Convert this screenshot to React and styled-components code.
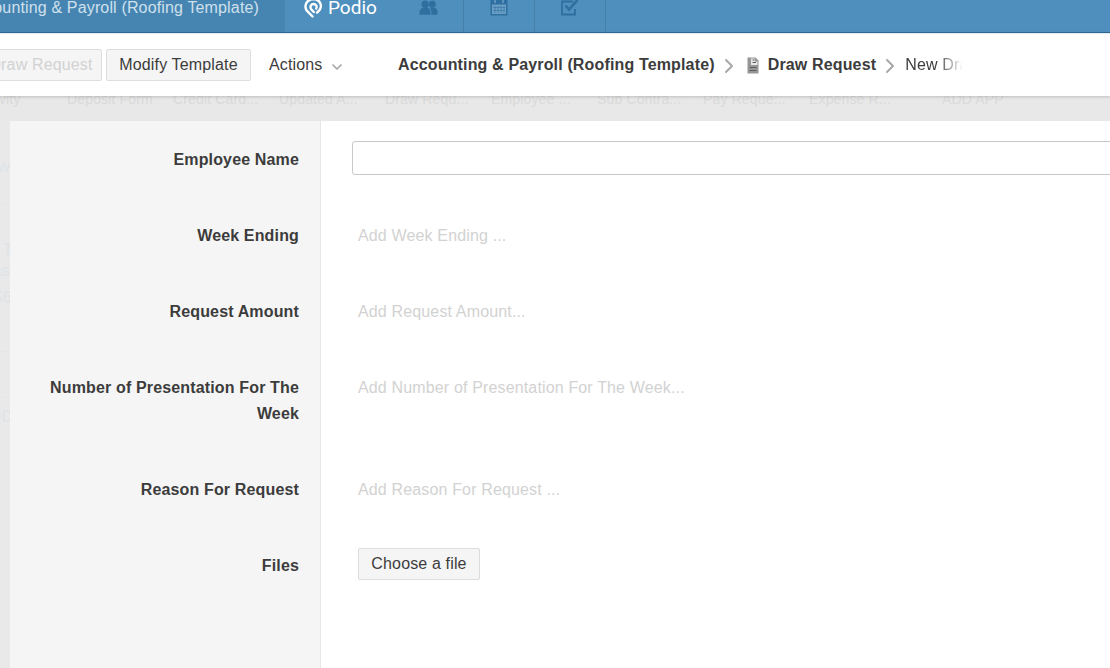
import styled, { createGlobalStyle } from "styled-components";
import { ChevronDown, ChevronRight } from "lucide-react";

const GlobalStyle = createGlobalStyle`
  html, body {
    margin: 0;
    padding: 0;
    height: 100%;
    overflow: hidden;
    background: #fff;
    font-family: "Liberation Sans", Arial, sans-serif;
    letter-spacing: 0.15px;
  }
`;

let Page = styled.div`
  width: 1110px;
  height: 668px;
  overflow: hidden;
  display: flex;
  flex-direction: column;
`;

let TopBar = styled.div`
  height: 32px;
  flex: none;
  display: flex;
  background: #4f8fbd;
  border-bottom: 1px solid #2f6a92;
  color: #fff;
`;

let WorkspaceCell = styled.div`
  width: 285px;
  flex: none;
  display: flex;
  justify-content: flex-end;
  overflow: hidden;
  white-space: nowrap;
  background: #4685b2;
  padding-right: 26px;
  box-sizing: border-box;
  font-size: 16px;
  line-height: 15px;
  color: #cfe0ec;
`;

let LogoCell = styled.div`
  width: 108px;
  flex: none;
  display: flex;
  align-items: flex-start;
  padding-left: 19px;
  box-sizing: border-box;
  gap: 5px;
  font-family: Roboto, "Liberation Sans", sans-serif;
  font-weight: 400;
  font-size: 19px;
  line-height: 15px;
  letter-spacing: 0;
`;

let NavCell = styled.div`
  width: 71px;
  flex: none;
  display: flex;
  justify-content: center;
  box-sizing: border-box;
  border-right: 1px solid #4680a9;
`;

let Toolbar = styled.div`
  height: 63px;
  flex: none;
  display: flex;
  align-items: center;
  background: #fff;
  position: relative;
  z-index: 2;
  box-shadow: 0 1px 3px rgba(0, 0, 0, 0.18);
  overflow: hidden;
  border-top: 1px solid #e4eef5;
  box-sizing: border-box;
`;

let ToolButton = styled.button`
  height: 32px;
  padding: 0;
  box-sizing: border-box;
  width: ${({ $width }) => $width}px;
  flex: none;
  border: 1px solid #dedede;
  border-radius: 2px;
  background: #f5f5f5;
  font: 16px "Liberation Sans", Arial, sans-serif;
  letter-spacing: 0.15px;
  color: ${({ $muted }) => ($muted ? "#d2d2d2" : "#3c3c3c")};
  margin: ${({ $margin }) => $margin || 0};
  white-space: nowrap;
`;

let Actions = styled.div`
  display: flex;
  align-items: center;
  gap: 6px;
  margin-left: 18px;
  width: 129px;
  flex: none;
  font-size: 16px;
  color: #3c3c3c;
  svg {
    color: #a5a5a5;
    margin-top: 3px;
  }
`;

let Breadcrumb = styled.div`
  display: flex;
  align-items: center;
  font-size: 16px;
  color: #3c3c3c;
  white-space: nowrap;
  svg.sep {
    color: #a8a8a8;
    margin: 2px 2px 0;
  }
  svg.sep:last-of-type {
    margin-right: 3px;
  }
`;

let Crumb = styled.span`
  font-weight: 700;
`;

let FadedCrumb = styled.span`
  width: 58px;
  overflow: hidden;
  -webkit-mask-image: linear-gradient(to right, #000 55%, transparent 100%);
  mask-image: linear-gradient(to right, #000 55%, transparent 100%);
`;

let AppTabs = styled.div`
  height: 25px;
  flex: none;
  display: flex;
  overflow: hidden;
  margin-left: -39px;
  background: #e8e8e8;
  width: 1149px;
`;

let AppTab = styled.div`
  width: ${({ $width }) => $width || 106}px;
  flex: none;
  font-size: 14px;
  line-height: 14px;
  margin-top: -4px;
  padding-left: ${({ $pad }) => $pad || 0}px;
  box-sizing: border-box;
  color: #dadada;
  white-space: nowrap;
`;

let Body = styled.div`
  flex: 1;
  display: flex;
  min-height: 0;
`;

let BackStrip = styled.div`
  width: 10px;
  flex: none;
  overflow: hidden;
  background: #e9e9e9;
  color: #dfe3e8;
  font-size: 16px;
  white-space: nowrap;
  position: relative;
`;

let BackText = styled.div`
  position: absolute;
  top: ${({ $top }) => $top}px;
  right: ${({ $right }) => $right || 0}px;
  line-height: 18px;
`;

let BackRule = styled.div`
  position: absolute;
  top: ${({ $top }) => $top}px;
  left: 0;
  right: 0;
  height: 1px;
  background: #e6e6e6;
`;

let FormGrid = styled.div`
  flex: 1;
  display: grid;
  grid-template-columns: 311px 1fr;
  grid-auto-rows: min-content;
  min-width: 0;
  background: linear-gradient(to right, #f5f5f5 310px, #e6e6e6 310px, #e6e6e6 311px, #fff 311px);
  overflow: hidden;
`;

let Label = styled.div`
  padding: 26px 22px 24px 30px;
  font-size: 16px;
  line-height: 26px;
  font-weight: 700;
  color: #3c3c3c;
  text-align: right;
`;

let Field = styled.div`
  padding: 26px 0 24px 37px;
  font-size: 16px;
  line-height: 26px;
  color: #d2d2d2;
  min-width: 0;
`;

let TextInput = styled.input`
  display: block;
  box-sizing: border-box;
  width: 900px;
  height: 34px;
  margin: -6px 0 -2px -6px;
  border: 1px solid #c8c8c8;
  border-radius: 3px;
  background: #fff;
  outline: none;
`;

let FileButton = styled.button`
  display: block;
  width: 122px;
  height: 32px;
  margin: -5px 0 -1px;
  padding: 0;
  border: 1px solid #dcdcdc;
  border-radius: 2px;
  background: #f5f5f5;
  font: 16px "Liberation Sans", Arial, sans-serif;
  letter-spacing: 0.15px;
  color: #3c3c3c;
`;

function PodioLogo() {
  return (
    <svg width="19" height="18" viewBox="0 3 19 18" fill="none" stroke="#fff" strokeWidth="2.4" strokeLinecap="round">
      <path d="M8.5 19.5 L2.6 13.4 C-0.4 8.6 3 2.2 9.5 2 C16 2.2 18.6 8.6 15.6 13 L13 15.6" />
      <path d="M9.8 15 L7 12 C5.4 9.6 7.2 7 9.6 7 C12 7 13.6 9.6 12.2 11.6" />
    </svg>
  );
}

function PeopleIcon() {
  return (
    <svg width="19" height="15" viewBox="0 0 20 15" fill="#2f6f9f">
      <circle cx="6.5" cy="4" r="3.8" />
      <circle cx="14" cy="4" r="3.6" />
      <path d="M0.5 15 V12 C0.5 9.5 3 8 5 7.5 H8.5 C10.5 8 12 9.5 12 12 V15 Z" />
      <path d="M13 15 V11.5 C13 10 12.3 8.8 11.5 8 L12.5 7.5 H16 C18 8 19.5 9.5 19.5 12 V15 Z" />
    </svg>
  );
}

function CalendarIcon() {
  return (
    <svg width="18" height="16" viewBox="0 0 18 16">
      <path d="M0.5 0 H17.5 V15.5 H0.5 Z" fill="#2f6f9f" />
      <rect x="2" y="4.5" width="14" height="9.5" fill="#6b9fc6" />
      <path d="M5 0 V3 M13 0 V3" stroke="#6b9fc6" strokeWidth="1.5" />
      <path d="M5 6 V13 M8 6 V13 M11 6 V13 M14 6 V13 M3 7.5 H15 M3 10.5 H15" stroke="#3f7cab" strokeWidth="0.8" />
    </svg>
  );
}

function CheckIcon() {
  return (
    <svg width="18" height="16" viewBox="0 0 18 16" fill="none" stroke="#2f6f9f">
      <path d="M14 9 V14.5 H1 V1.5 H12" strokeWidth="1.8" />
      <path d="M4.5 5.5 L8 9.5 L16.5 0" strokeWidth="2.6" />
    </svg>
  );
}

let DocSvg = styled.svg`
  margin: 1px 8px 0 3px;
  flex: none;
`;

function DocIcon() {
  return (
    <DocSvg width="14" height="17" viewBox="0 0 14 17">
      <path d="M1.5 0.5 H9.5 L12.5 3.5 V16.5 H1.5 Z" fill="#969696" />
      <path d="M5 1.5 H8.5 V4.5 H11.5 V8 H5 Z" fill="#e8e8e8" />
      <path d="M6.5 3 H8 M6.5 5.5 H10 M3.5 10.5 H10.5 M3.5 13.5 H10.5" stroke="#5f5f5f" strokeWidth="1" />
    </DocSvg>
  );
}

const tabs = ["Activity", "Deposit Form", "Credit Card...", "Updated A...", "Draw Requ...", "Employee ...", "Sub Contra...", "Pay Reque...", "Expense R..."];

const fields = [
  { label: "Employee Name", input: true },
  { label: "Week Ending", hint: "Add Week Ending ..." },
  { label: "Request Amount", hint: "Add Request Amount..." },
  { label: "Number of Presentation For The Week", hint: "Add Number of Presentation For The Week..." },
  { label: "Reason For Request", hint: "Add Reason For Request ..." },
  { label: "Files", file: true },
];

function Row({ field }) {
  return (
    <>
      <Label>{field.label}</Label>
      <Field>
        {field.input && <TextInput />}
        {field.hint}
        {field.file && <FileButton>Choose a file</FileButton>}
      </Field>
    </>
  );
}

export default function App() {
  return (
    <Page>
      <GlobalStyle />
      <TopBar>
        <WorkspaceCell>Accounting &amp; Payroll (Roofing Template)</WorkspaceCell>
        <LogoCell>
          <PodioLogo />
          Podio
        </LogoCell>
        <NavCell>
          <PeopleIcon />
        </NavCell>
        <NavCell>
          <CalendarIcon />
        </NavCell>
        <NavCell>
          <CheckIcon />
        </NavCell>
      </TopBar>

      <Toolbar>
        <ToolButton $muted $width={122} $margin="0 0 0 -20px">Draw Request</ToolButton>
        <ToolButton $width={145} $margin="0 0 0 4px">Modify Template</ToolButton>
        <Actions>
          Actions
          <ChevronDown size={16} strokeWidth={2.5} />
        </Actions>
        <Breadcrumb>
          <Crumb>Accounting &amp; Payroll (Roofing Template)</Crumb>
          <ChevronRight className="sep" size={24} strokeWidth={2} />
          <DocIcon />
          <Crumb>Draw Request</Crumb>
          <ChevronRight className="sep" size={24} strokeWidth={2} />
          <FadedCrumb>New Draw</FadedCrumb>
        </Breadcrumb>
      </Toolbar>

      <AppTabs>
        {tabs.map((t, i) => (
          <AppTab key={t} $pad={i === 0 ? 14 : 0}>{t}</AppTab>
        ))}
        <AppTab $pad={27} $width={160}>ADD APP</AppTab>
      </AppTabs>

      <Body>
        <BackStrip>
          <BackText $top={37}>New</BackText>
          <BackRule $top={83} />
          <BackText $top={120} $right={-3}>Task T</BackText>
          <BackText $top={141}>Items</BackText>
          <BackText $top={168} $right={-2}>$56</BackText>
          <BackRule $top={230} />
          <BackRule $top={276} />
          <BackText $top={287} $right={-3}>ADD</BackText>
        </BackStrip>
        <FormGrid>
          {fields.map((f) => (
            <Row key={f.label} field={f} />
          ))}
        </FormGrid>
      </Body>
    </Page>
  );
}
